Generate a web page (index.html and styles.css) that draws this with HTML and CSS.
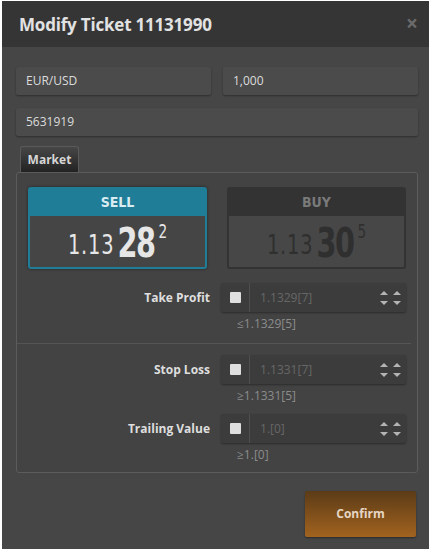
FILE: index.html
```html
<!DOCTYPE html>
<html>
<head>
<meta charset="utf-8">
<link rel="stylesheet" href="styles.css">
</head>
<body>
<div class="dialog">
  <div class="header">
    <span class="title">Modify Ticket 11131990</span>
    <span class="close">×</span>
  </div>
  <div class="content">
    <div class="fields">
      <div class="field">EUR/USD</div>
      <div class="field">1,000</div>
    </div>
    <div class="field wide">5631919</div>
    <div class="tabs"><div class="tab">Market</div></div>
    <div class="panel">
      <div class="quotes">
        <div class="quote sell">
          <div class="qhead">SELL</div>
          <div class="qprice"><span class="small">1.13</span><span class="big">28</span><span class="sup">2</span></div>
        </div>
        <div class="quote buy">
          <div class="qhead">BUY</div>
          <div class="qprice"><span class="small">1.13</span><span class="big">30</span><span class="sup">5</span></div>
        </div>
      </div>
      <div class="row first">
        <div class="label">Take Profit</div>
        <div class="ig">
          <span class="cb"></span><span class="val">1.1329[7]</span>
          <span class="spin"><span class="pair"><i class="up"></i><i class="dn"></i></span><span class="pair"><i class="up"></i><i class="dn"></i></span></span>
        </div>
      </div>
      <div class="hint">≤1.1329[5]</div>
      <div class="divider"></div>
      <div class="row">
        <div class="label">Stop Loss</div>
        <div class="ig">
          <span class="cb"></span><span class="val">1.1331[7]</span>
          <span class="spin"><span class="pair"><i class="up"></i><i class="dn"></i></span><span class="pair"><i class="up"></i><i class="dn"></i></span></span>
        </div>
      </div>
      <div class="hint">≥1.1331[5]</div>
      <div class="row gap">
        <div class="label">Trailing Value</div>
        <div class="ig">
          <span class="cb"></span><span class="val">1.[0]</span>
          <span class="spin"><span class="pair"><i class="up"></i><i class="dn"></i></span><span class="pair"><i class="up"></i><i class="dn"></i></span></span>
        </div>
      </div>
      <div class="hint">≥1.[0]</div>
    </div>
    <div class="footer"><div class="confirm">Confirm</div></div>
  </div>
</div>
</body>
</html>
```
FILE: styles.css
```css
html, body { margin: 0; padding: 0; background: #ffffff; }
body { font-family: "Open Sans", "DejaVu Sans", sans-serif; }
.dialog {
  margin: 1px 3px 0 2px;
  width: 427px;
  height: 548px;
  background: #464646;
  display: flex;
  flex-direction: column;
}
.header {
  height: 46px;
  background: #353535;
  display: flex;
  align-items: center;
  justify-content: space-between;
  padding: 0 11px 0 17px;
  flex-shrink: 0;
}
.title { color: #e2e2e2; font-size: 17px; font-weight: 700; letter-spacing: -0.2px; }
.close { color: #6a6a6a; font-size: 21px; font-weight: 700; margin-top: -2px; }
.content { padding: 20px 11px 0 14px; display: flex; flex-direction: column; }
.fields { display: flex; gap: 12px; }
.field {
  flex: 1;
  height: 28px;
  box-sizing: border-box;
  background: #4b4b4b;
  border-radius: 2px;
  box-shadow: 0 1px 2px rgba(0,0,0,0.35);
  color: #dcdcdc;
  font-size: 12px;
  line-height: 28px;
  padding-left: 10px;
}
.field.wide { margin-top: 13px; flex: none; }
.tabs { margin-top: 10px; padding-left: 4px; display: flex; }
.tab {
  width: 59px;
  height: 26px;
  box-sizing: border-box;
  background: linear-gradient(#474747, #222222);
  border: 1px solid #5a5a5a;
  border-bottom: none;
  border-radius: 3px 3px 0 0;
  color: #d6d6d6;
  font-size: 12px;
  font-weight: 700;
  text-align: center;
  line-height: 25px;
}
.panel {
  height: 301px;
  box-sizing: border-box;
  border: 1px solid #5c5c5c;
  border-radius: 3px;
  background: #434343;
  padding: 14px 11px 0 11px;
}
.quotes { display: flex; gap: 20px; }
.quote {
  width: 179px;
  height: 82px;
  box-sizing: border-box;
  border: 2px solid;
  border-radius: 3px;
  display: flex;
  flex-direction: column;
  font-family: "DejaVu Sans Condensed", "DejaVu Sans", sans-serif;
}
.qhead {
  height: 27px;
  line-height: 27px;
  text-align: center;
  font-size: 14px;
  font-weight: 700;
  font-family: "DejaVu Sans Condensed", "Roboto", sans-serif;
}
.sell { border-color: #1f7d98; background: #454545; box-shadow: 0 0 3px rgba(0,0,0,0.5); }
.sell .qhead { background: #1f7d98; color: #d8ecf2; }
.buy { border-color: #333333; background: #474747; }
.buy .qhead { background: #333333; color: #7a7a7a; }
.qprice {
  flex: 1;
  display: flex;
  align-items: flex-start;
  justify-content: center;
  padding-top: 4px;
  transform: scaleX(0.8);
}
.small { font-size: 27px; margin-top: 9px; letter-spacing: 1px; }
.big { font-size: 40px; font-weight: 700; margin-left: 4px; line-height: 1; margin-top: 3px; letter-spacing: -2px; }
.sup { font-size: 19px; margin-left: 5px; margin-top: 0px; }
.sell .qprice { color: #e6e6e6; }
.buy .qprice { color: #2f2f2f; }
.row { display: flex; align-items: center; margin-top: 14px; }
.row.gap { margin-top: 10px; }
.label {
  width: 184px;
  box-sizing: border-box;
  text-align: right;
  color: #dedede;
  font-size: 12px;
  font-weight: 700;
}
.ig {
  margin-left: 11px;
  width: 187px;
  height: 29px;
  box-sizing: border-box;
  background: #3c3c3c;
  border-radius: 2px;
  box-shadow: 0 1px 2px rgba(0,0,0,0.35);
  display: flex;
  align-items: center;
}
.cb {
  width: 11px;
  height: 11px;
  background: #dedede;
  border-radius: 1px;
  margin-left: 9px;
  margin-right: 8px;
}
.val {
  border-left: 1px solid #4f4f4f;
  height: 29px;
  line-height: 29px;
  padding-left: 10px;
  color: #676767;
  font-size: 12px;
  flex: 1;
}
.spin { display: flex; gap: 5px; margin-right: 5px; }
.pair { display: flex; flex-direction: column; gap: 6px; }
.pair i { display: block; width: 0; height: 0; border-left: 4.5px solid transparent; border-right: 4.5px solid transparent; }
.pair .up { border-bottom: 4px solid #b4b4b4; }
.pair .dn { border-top: 4px solid #b4b4b4; }
.hint {
  padding-left: 209px;
  color: #8c8c8c;
  font-size: 12px;
  height: 16px;
  line-height: 16px;
  margin-top: 4px;
}
.divider { height: 1px; background: #555555; margin: 11px 0 0 -11px; width: 394px; }
.divider + .row { margin-top: 11px; }
.footer { display: flex; justify-content: flex-end; margin-top: 18px; padding-right: 2px; }
.confirm {
  width: 111px;
  height: 46px;
  border-radius: 2px;
  background: linear-gradient(#5b3b17, #a2631f);
  box-shadow: 0 1px 2px rgba(0,0,0,0.4);
  color: #e6d6c4;
  font-size: 12px;
  font-weight: 700;
  text-align: center;
  line-height: 46px;
}
```
